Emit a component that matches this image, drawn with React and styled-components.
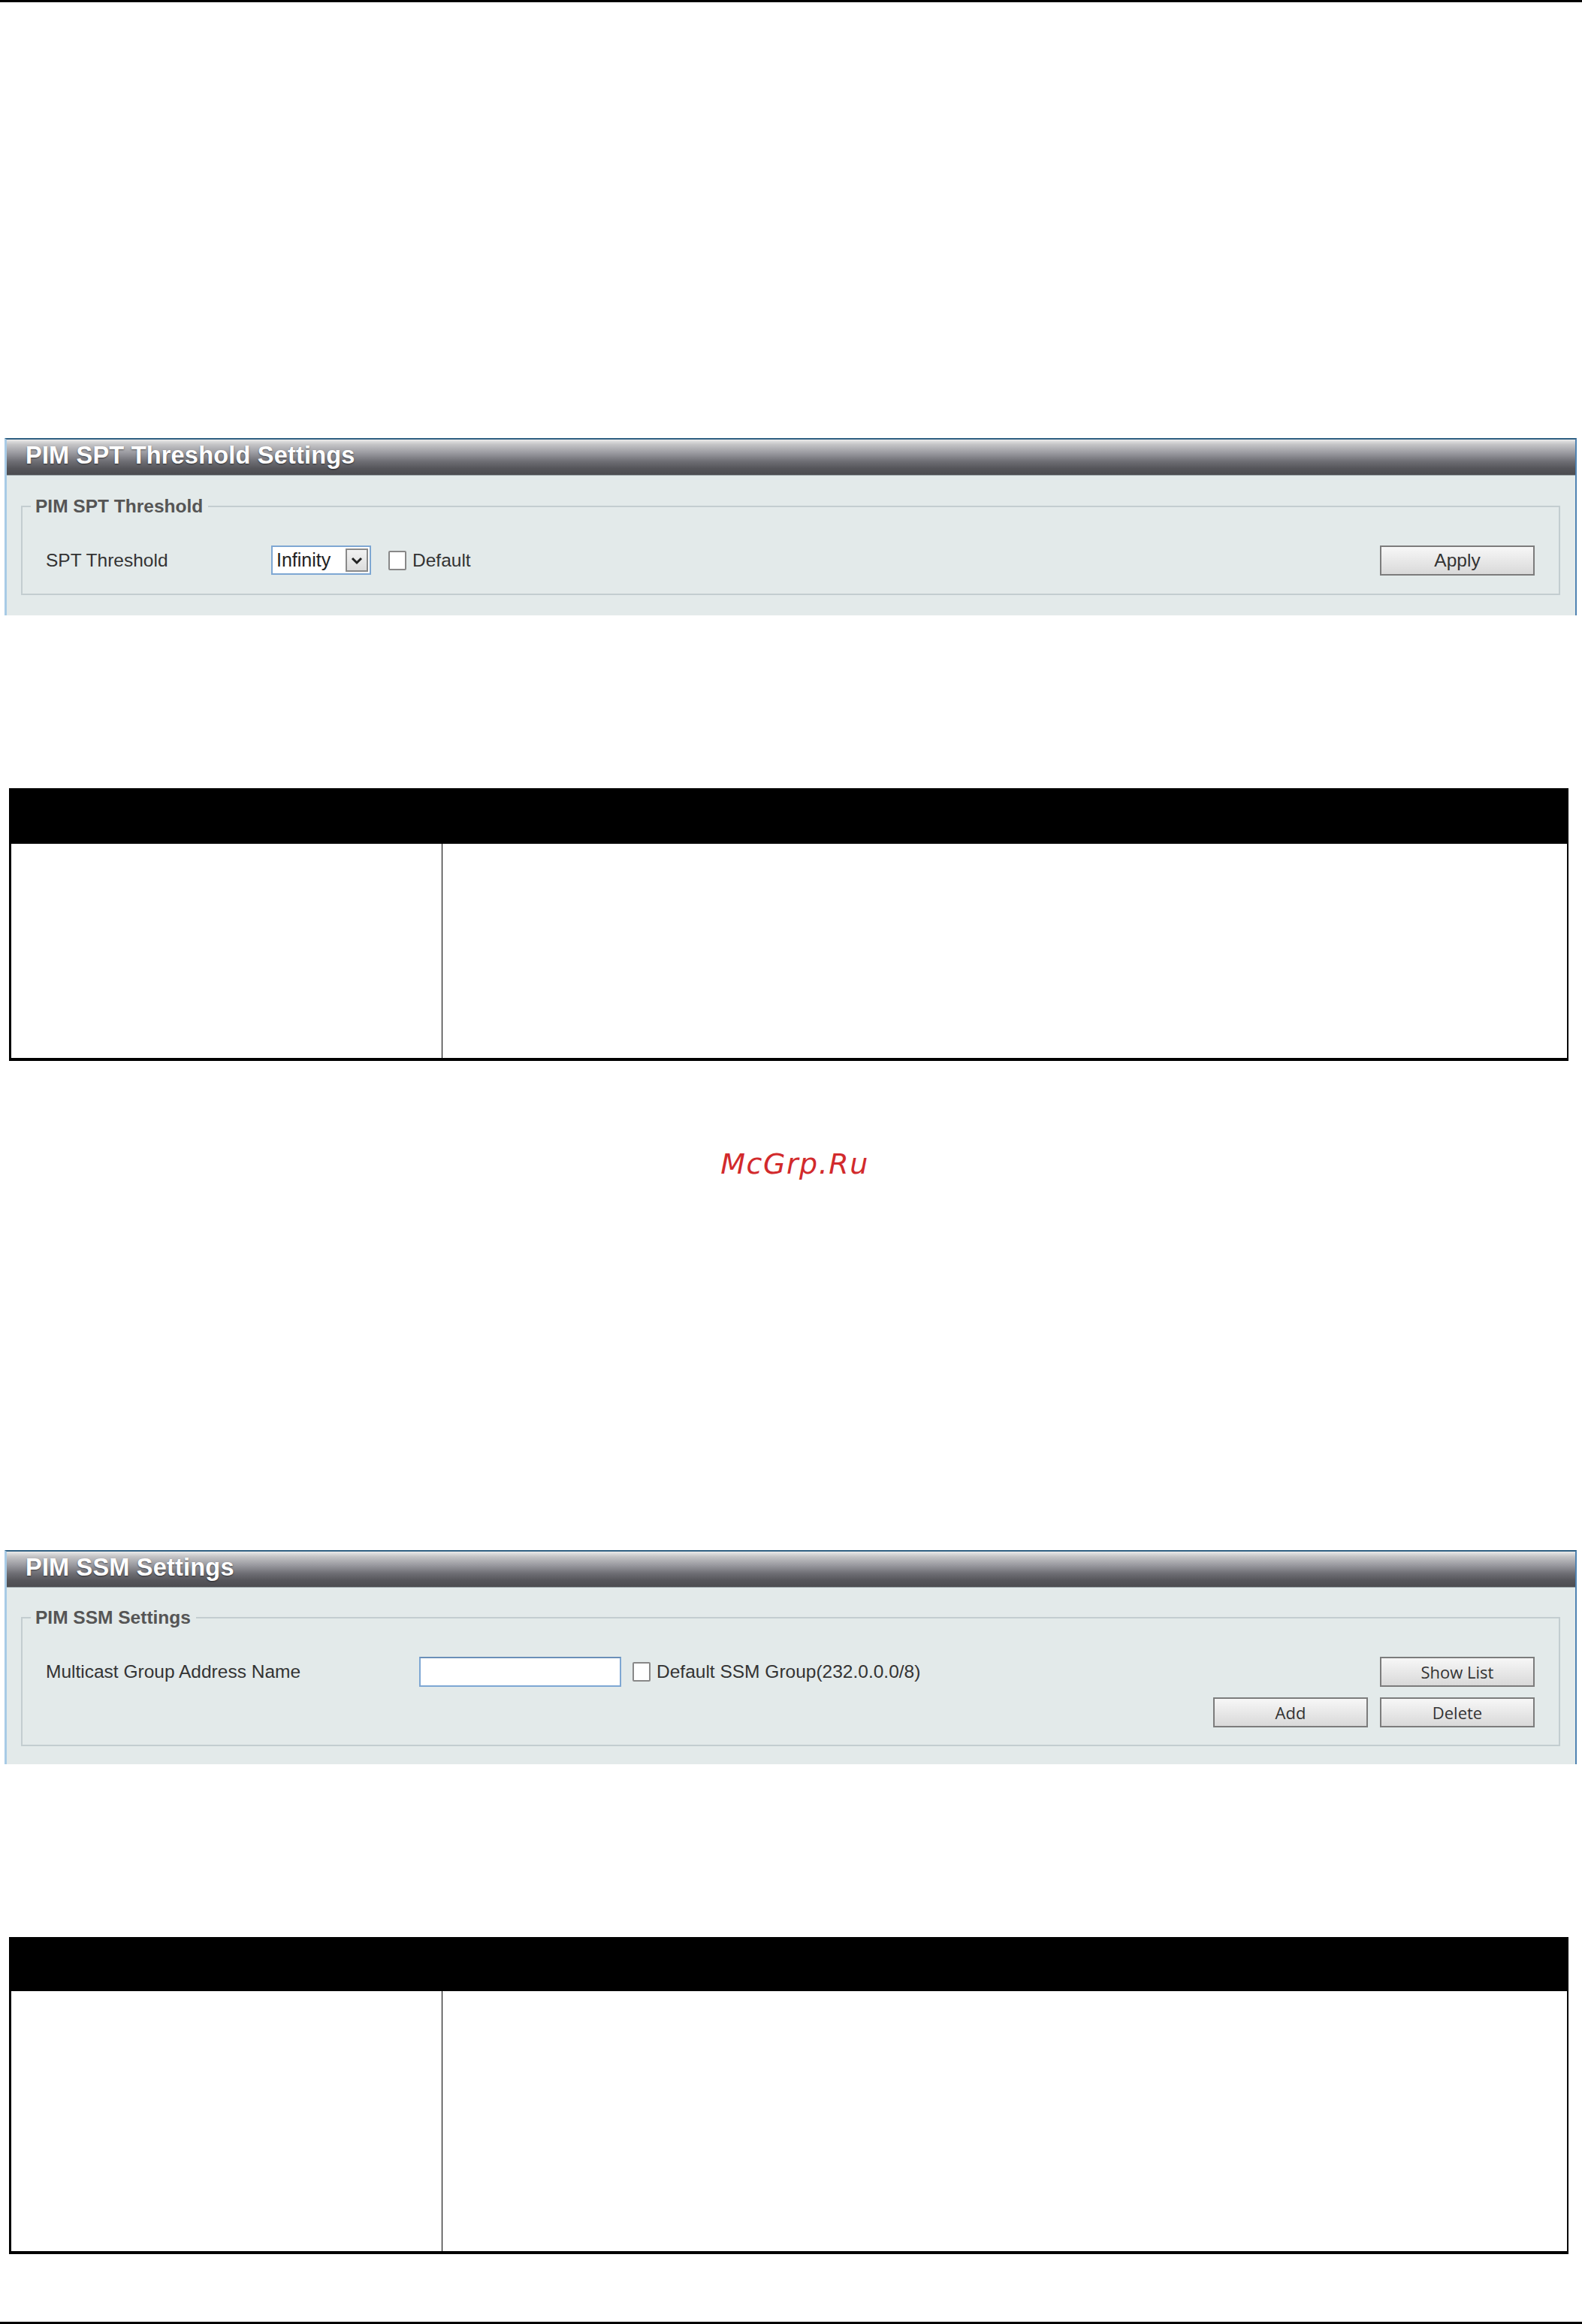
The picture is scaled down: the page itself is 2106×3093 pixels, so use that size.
import React from "react";
import styled, { createGlobalStyle } from "styled-components";

const Global = createGlobalStyle`
  html, body { margin: 0; padding: 0; background: #ffffff; }
  body { font-family: "Liberation Sans", Arial, sans-serif; color: #333; }
`;

const Page = styled.div`
  width: 2106px;
  display: flex;
  flex-direction: column;
`;

const Rule = styled.div`
  height: 3px;
  background: #000;
  margin-top: ${(p) => p.$top || 0}px;
`;

const Panel = styled.section`
  margin: ${(p) => p.$top}px 7px 0 6px;
  border-top: 2px solid #2f5f82;
  border-left: 3px solid #a8cbe6;
  border-right: 2px solid #4f83b2;
  background: #e3eaea;
`;

const TitleBar = styled.div`
  height: 48px;
  box-sizing: border-box;
  padding: 0 0 4px 25px;
  display: flex;
  align-items: center;
  background: linear-gradient(
    to bottom,
    #eaeaea 0%,
    #c4c4c6 14%,
    #9a9aa0 38%,
    #6e6e74 62%,
    #55555a 82%,
    #4c4c50 100%
  );
  border-bottom: 1px solid #9aa4a8;
  color: #fff;
  font-family: "Liberation Sans", Arial, sans-serif;
  font-weight: bold;
  font-size: 32.5px;
  letter-spacing: 0.2px;
  text-shadow: 0 1px 2px rgba(0, 0, 0, 0.55);
`;

const Body = styled.div`
  padding: ${(p) => p.$pt}px 20px ${(p) => p.$pb}px 19px;
`;

const Fieldset = styled.fieldset`
  margin: 0;
  padding: ${(p) => p.$pt}px 32px ${(p) => p.$pb}px 31px;
  border: 2px solid #c3cdd0;
  min-width: 0;
`;

const Legend = styled.legend`
  margin-left: -20px;
  padding: 0 7px 0 6px;
  font-size: 24.5px;
  line-height: 28px;
  font-weight: bold;
  color: #555;
`;

const Rows = styled.div`
  display: flex;
  flex-direction: column;
  gap: 14px;
`;

const Row = styled.div`
  display: flex;
  align-items: center;
  height: ${(p) => p.$h || 39}px;
`;

const Label = styled.div`
  width: ${(p) => p.$w}px;
  flex: none;
  font-size: 24.5px;
  color: #333;
`;

const Spacer = styled.div`
  flex: 1;
`;

const Select = styled.div`
  width: 133px;
  height: 39px;
  box-sizing: border-box;
  border: 2px solid #7ea7d3;
  background: #fff;
  display: flex;
  align-items: center;
  padding-left: 5px;
  font-size: 25px;
  color: #222;
`;

const SelectText = styled.span`
  flex: 1;
`;

const Arrow = styled.div`
  width: 30px;
  height: 31px;
  margin-right: 2px;
  box-sizing: border-box;
  border: 2px solid #8a8a8a;
  background: linear-gradient(#f2f2f2, #dcdcdc);
  display: flex;
  align-items: center;
  justify-content: center;
`;

const Input = styled.div`
  width: 269px;
  height: 40px;
  box-sizing: border-box;
  border: 2px solid #7ea7d3;
  border-top-color: #6b8fb8;
  background: #fff;
  flex: none;
`;

const Check = styled.div`
  width: 24px;
  height: 26px;
  box-sizing: border-box;
  border: 2px solid #888;
  border-radius: 2px;
  background: #fff;
  margin-left: ${(p) => p.$ml}px;
  margin-right: 8px;
  flex: none;
`;

const CheckText = styled.span`
  font-size: 24.5px;
  color: #333;
`;

const Button = styled.button`
  width: 206px;
  height: 40px;
  box-sizing: border-box;
  border: 2px solid #7c7c7c;
  border-radius: 0;
  background: linear-gradient(#f7f7f7, #d9d9d9);
  font-family: ${(p) =>
    p.$alt ? '"Open Sans", "DejaVu Sans", sans-serif' : '"Liberation Sans", Arial, sans-serif'};
  font-size: ${(p) => (p.$alt ? 22 : 24.5)}px;
  color: #333;
  padding: 0;
  margin-left: ${(p) => p.$ml || 0}px;
  flex: none;
`;

const Table = styled.div`
  margin: ${(p) => p.$top}px 18px 0 12px;
  border-left: 3px solid #000;
  border-right: 2px solid #000;
  border-bottom: 4px solid #000;
`;

const TableHead = styled.div`
  height: ${(p) => p.$h}px;
  background: #000;
`;

const TableBody = styled.div`
  display: grid;
  grid-template-columns: 573px 1fr;
  height: ${(p) => p.$h}px;
`;

const Cell = styled.div`
  border-left: ${(p) => (p.$divider ? "1px solid #000" : "none")};
  background: #fff;
`;

const Watermark = styled.div`
  margin-top: 114px;
  height: 46px;
  line-height: 46px;
  text-align: center;
  padding-left: 10px;
  font-family: "DejaVu Sans", sans-serif;
  font-style: italic;
  font-size: 38px;
  letter-spacing: 1.5px;
  color: #d22a2c;
`;

const Chevron = () => (
  <svg width="18" height="14" viewBox="0 0 18 14">
    <path d="M3 4 L9 10 L15 4" fill="none" stroke="#222" strokeWidth="3" />
  </svg>
);

export default function App() {
  return (
    <>
      <Global />
      <Page>
        <Rule />
        <Panel $top={580}>
          <TitleBar>PIM SPT Threshold Settings</TitleBar>
          <Body $pt={27} $pb={27}>
            <Fieldset $pt={38} $pb={25}>
              <Legend>PIM SPT Threshold</Legend>
              <Row>
                <Label $w={300}>SPT Threshold</Label>
                <Select>
                  <SelectText>Infinity</SelectText>
                  <Arrow>
                    <Chevron />
                  </Arrow>
                </Select>
                <Check $ml={23} />
                <CheckText>Default</CheckText>
                <Spacer />
                <Button>Apply</Button>
              </Row>
            </Fieldset>
          </Body>
        </Panel>

        <Table $top={230}>
          <TableHead $h={74} />
          <TableBody $h={285}>
            <Cell />
            <Cell $divider />
          </TableBody>
        </Table>

        <Watermark>McGrp.Ru</Watermark>

        <Panel $top={491}>
          <TitleBar>PIM SSM Settings</TitleBar>
          <Body $pt={26} $pb={24}>
            <Fieldset $pt={38} $pb={23}>
              <Legend>PIM SSM Settings</Legend>
              <Rows>
                <Row $h={40}>
                  <Label $w={497}>Multicast Group Address Name</Label>
                  <Input />
                  <Check $ml={15} />
                  <CheckText>Default SSM Group(232.0.0.0/8)</CheckText>
                  <Spacer />
                  <Button $alt>Show List</Button>
                </Row>
                <Row $h={40}>
                  <Spacer />
                  <Button $alt>Add</Button>
                  <Button $alt $ml={16}>
                    Delete
                  </Button>
                </Row>
              </Rows>
            </Fieldset>
          </Body>
        </Panel>

        <Table $top={230}>
          <TableHead $h={72} />
          <TableBody $h={346}>
            <Cell />
            <Cell $divider />
          </TableBody>
        </Table>

        <Rule $top={90} />
      </Page>
    </>
  );
}
